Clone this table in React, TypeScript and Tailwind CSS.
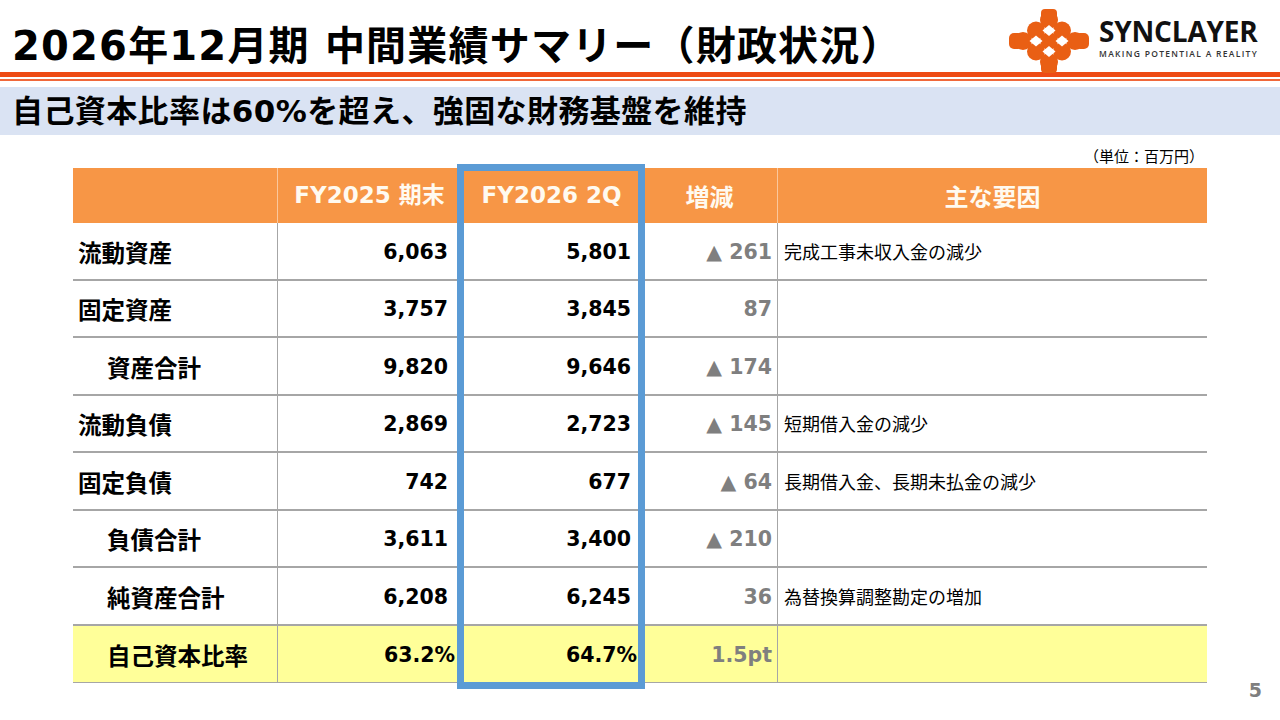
const rows = [
  { label: "流動資産", indent: false, a: "6,063", b: "5,801", diff: "▲ 261", note: "完成工事未収入金の減少" },
  { label: "固定資産", indent: false, a: "3,757", b: "3,845", diff: "87", note: "" },
  { label: "資産合計", indent: true, a: "9,820", b: "9,646", diff: "▲ 174", note: "" },
  { label: "流動負債", indent: false, a: "2,869", b: "2,723", diff: "▲ 145", note: "短期借入金の減少" },
  { label: "固定負債", indent: false, a: "742", b: "677", diff: "▲ 64", note: "長期借入金、長期未払金の減少" },
  { label: "負債合計", indent: true, a: "3,611", b: "3,400", diff: "▲ 210", note: "" },
  { label: "純資産合計", indent: true, a: "6,208", b: "6,245", diff: "36", note: "為替換算調整勘定の増加" },
];

const num = "font-['DejaVu_Sans','Noto_Sans_CJK_JP',sans-serif]";
const jp = "font-['Noto_Sans_CJK_JP',sans-serif]";

const Logo = () => (
  <svg width="80" height="64" viewBox="0 0 80 64">
    <g fill="#e95f14">
      <rect x="32" y="0" width="16" height="12" rx="4" />
      <rect x="32" y="52" width="16" height="12" rx="4" />
      <rect x="0" y="24" width="14" height="16" rx="5" />
      <rect x="66" y="24" width="14" height="16" rx="5" />
      {[
        [40, 11],
        [27, 21.5],
        [53, 21.5],
        [14, 32],
        [40, 32],
        [66, 32],
        [27, 42.5],
        [53, 42.5],
        [40, 53],
      ].map(([cx, cy]) => (
        <circle key={`${cx}-${cy}`} cx={cx} cy={cy} r="9" />
      ))}
    </g>
    <g fill="#ffffff">
      {[
        [40, 21.5],
        [27, 32],
        [53, 32],
        [40, 42.5],
      ].map(([cx, cy]) => (
        <polygon key={`${cx}-${cy}`} points={`${cx},${cy - 5.5} ${cx + 6.5},${cy} ${cx},${cy + 5.5} ${cx - 6.5},${cy}`} />
      ))}
    </g>
  </svg>
);

const App = () => {
  return (
    <div className="relative h-[720px] w-[1280px] overflow-hidden bg-white text-black">
      {/* header */}
      <header className="flex h-[72px] items-start justify-between">
        <h1 className={`${num} pl-[12px] pt-[22px] text-[40px] font-bold leading-[48px] tracking-[1.2px]`}>
          {"2026年12月期 中間業績サマリー\uFF08財政状況\uFF09"}
        </h1>
        <div className="flex items-start pr-[22px] pt-[9px]">
          <Logo />
          <div className="ml-[10px] flex flex-col pt-[7px] font-['Open_Sans',sans-serif]">
            <span className="text-[28px] font-bold leading-[30px] tracking-[-0.2px] text-[#111]">SYNCLAYER</span>
            <span className="mt-[3px] text-[8.5px] font-semibold leading-[10px] tracking-[1.3px] text-[#333]">
              MAKING POTENTIAL A REALITY
            </span>
          </div>
        </div>
      </header>
      <div className="h-[5px] bg-[#ee4b14]" />
      <div className="mt-[2px] h-[2px] bg-[#f0683a]" />
      <div className="mt-[6px] flex h-[48px] items-center bg-[#dae3f3] pl-[12px]">
        <h2 className={`${num} text-[31px] font-bold leading-none tracking-[0.4px]`}>
          自己資本比率は60%を超え、強固な財務基盤を維持
        </h2>
      </div>

      {/* unit */}
      <div className="flex h-[33px] items-end justify-end pb-[2px] pr-[76px]">
        <span className={`${jp} text-[15px] leading-[20px]`}>{"\uFF08単位\uFF1A百万円\uFF09"}</span>
      </div>

      {/* table */}
      <div className="relative ml-[73px] w-[1134px]">
        <div className="grid h-[55px] grid-cols-[205px_184px_180px_136px_429px] bg-[#f79646] text-[#fffaf0]">
          <div className="border-r border-[#fbc79c]" />
          <div className={`${num} flex items-center justify-center border-r border-[#fbc79c] text-[23px] font-bold`}>
            FY2025 期末
          </div>
          <div className={`${num} flex items-center justify-center border-r border-[#fbc79c] text-[23px] font-bold`}>
            FY2026 2Q
          </div>
          <div className={`${jp} flex items-center justify-center border-r border-[#fbc79c] text-[24px] font-bold`}>
            増減
          </div>
          <div className={`${jp} flex items-center justify-center text-[24px] font-bold`}>主な要因</div>
        </div>

        {rows.map((r) => (
          <div
            key={r.label}
            className="grid h-[57.5px] grid-cols-[205px_184px_180px_136px_429px] border-b-2 border-[#a6a6a6]"
          >
            <div
              className={`${jp} flex items-center border-r border-[#a6a6a6] pt-[3px] text-[23.5px] font-bold ${
                r.indent ? "pl-[34px]" : "pl-[5px]"
              }`}
            >
              {r.label}
            </div>
            <div
              className={`${num} flex items-center justify-end border-r border-[#a6a6a6] pr-[13px] pt-[3px] text-[20.5px] font-bold`}
            >
              {r.a}
            </div>
            <div
              className={`${num} flex items-center justify-end border-r border-[#a6a6a6] pr-[10px] pt-[3px] text-[20.5px] font-bold`}
            >
              {r.b}
            </div>
            <div
              className={`${num} flex items-center justify-end border-r border-[#a6a6a6] pr-[5px] pt-[3px] text-[20.5px] font-bold text-[#7f7f7f]`}
            >
              {r.diff}
            </div>
            <div className={`${jp} flex items-center pl-[6px] pt-[1px] text-[18px]`}>{r.note}</div>
          </div>
        ))}

        <div className="grid h-[57.5px] grid-cols-[205px_184px_180px_136px_429px] border-b border-[#a6a6a6] bg-[#ffff99]">
          <div className={`${jp} flex items-center border-r border-[#a6a6a6] pl-[34px] pt-[3px] text-[23.5px] font-bold`}>
            自己資本比率
          </div>
          <div
            className={`${num} flex items-center justify-end border-r border-[#a6a6a6] pr-[6px] pt-[3px] text-[20.5px] font-bold`}
          >
            63.2%
          </div>
          <div
            className={`${num} flex items-center justify-end border-r border-[#a6a6a6] pr-[4px] pt-[3px] text-[20.5px] font-bold`}
          >
            64.7%
          </div>
          <div
            className={`${num} flex items-center justify-end border-r border-[#a6a6a6] pr-[5px] pt-[3px] text-[20.5px] font-bold text-[#7f7f7f]`}
          >
            1.5pt
          </div>
          <div />
        </div>

        {/* highlight frame over FY2026 2Q */}
        <div className="pointer-events-none absolute left-[384px] top-[-4px] h-[525px] w-[188px] border-[7px] border-[#5b9bd5]" />
      </div>

      <span className={`${num} absolute right-[18px] top-[676px] text-[19px] font-bold text-[#7f7f7f]`}>5</span>
    </div>
  );
};

export default App;
